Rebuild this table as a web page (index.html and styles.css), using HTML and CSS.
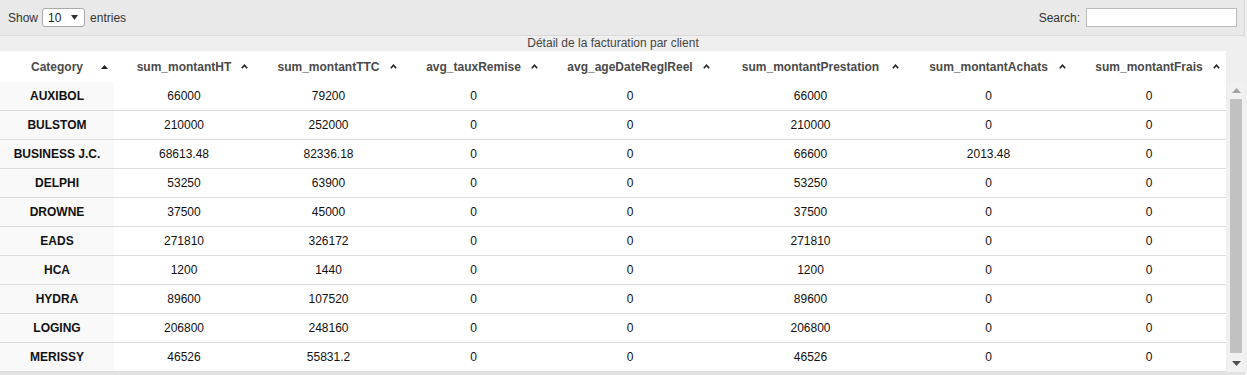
FILE: index.html
```html
<!DOCTYPE html>
<html lang="fr">
<head>
<meta charset="utf-8">
<title>Détail de la facturation par client</title>
<link rel="stylesheet" href="styles.css">
</head>
<body>
<div class="wrap">
  <div class="topbar">
    <label class="length">Show <span class="select">10<svg class="dd" width="7" height="5" viewBox="0 0 7 5"><polygon points="0,0 7,0 3.5,5" fill="#333"/></svg></span> entries</label>
    <label class="search">Search: <span class="input"></span></label>
  </div>
  <div class="caption">Détail de la facturation par client</div>
  <table class="head">
    <colgroup>
      <col class="c1"><col class="c2"><col class="c3"><col class="c4"><col class="c5"><col class="c6"><col class="c7"><col class="c8">
    </colgroup>
    <thead>
      <tr>
        <th class="asc">Category<svg class="si" width="7" height="4" viewBox="0 0 7 4"><polygon points="0,4 7,4 3.5,0" fill="#222"/></svg></th>
        <th>sum_montantHT<svg class="si" width="7" height="5" viewBox="0 0 7 5"><polyline points="0.8,4.2 3.5,1.2 6.2,4.2" fill="none" stroke="#222" stroke-width="1.6"/></svg></th>
        <th>sum_montantTTC<svg class="si" width="7" height="5" viewBox="0 0 7 5"><polyline points="0.8,4.2 3.5,1.2 6.2,4.2" fill="none" stroke="#222" stroke-width="1.6"/></svg></th>
        <th>avg_tauxRemise<svg class="si" width="7" height="5" viewBox="0 0 7 5"><polyline points="0.8,4.2 3.5,1.2 6.2,4.2" fill="none" stroke="#222" stroke-width="1.6"/></svg></th>
        <th>avg_ageDateReglReel<svg class="si" width="7" height="5" viewBox="0 0 7 5"><polyline points="0.8,4.2 3.5,1.2 6.2,4.2" fill="none" stroke="#222" stroke-width="1.6"/></svg></th>
        <th>sum_montantPrestation<svg class="si" width="7" height="5" viewBox="0 0 7 5"><polyline points="0.8,4.2 3.5,1.2 6.2,4.2" fill="none" stroke="#222" stroke-width="1.6"/></svg></th>
        <th>sum_montantAchats<svg class="si" width="7" height="5" viewBox="0 0 7 5"><polyline points="0.8,4.2 3.5,1.2 6.2,4.2" fill="none" stroke="#222" stroke-width="1.6"/></svg></th>
        <th>sum_montantFrais<svg class="si" width="7" height="5" viewBox="0 0 7 5"><polyline points="0.8,4.2 3.5,1.2 6.2,4.2" fill="none" stroke="#222" stroke-width="1.6"/></svg></th>
      </tr>
    </thead>
  </table>
  <div class="bodyarea">
    <table class="body">
      <colgroup>
        <col class="c1"><col class="c2"><col class="c3"><col class="c4"><col class="c5"><col class="c6"><col class="c7"><col class="c8">
      </colgroup>
      <tbody>
        <tr><td class="cat">AUXIBOL</td><td>66000</td><td>79200</td><td>0</td><td>0</td><td>66000</td><td>0</td><td>0</td></tr>
        <tr><td class="cat">BULSTOM</td><td>210000</td><td>252000</td><td>0</td><td>0</td><td>210000</td><td>0</td><td>0</td></tr>
        <tr><td class="cat">BUSINESS J.C.</td><td>68613.48</td><td>82336.18</td><td>0</td><td>0</td><td>66600</td><td>2013.48</td><td>0</td></tr>
        <tr><td class="cat">DELPHI</td><td>53250</td><td>63900</td><td>0</td><td>0</td><td>53250</td><td>0</td><td>0</td></tr>
        <tr><td class="cat">DROWNE</td><td>37500</td><td>45000</td><td>0</td><td>0</td><td>37500</td><td>0</td><td>0</td></tr>
        <tr><td class="cat">EADS</td><td>271810</td><td>326172</td><td>0</td><td>0</td><td>271810</td><td>0</td><td>0</td></tr>
        <tr><td class="cat">HCA</td><td>1200</td><td>1440</td><td>0</td><td>0</td><td>1200</td><td>0</td><td>0</td></tr>
        <tr><td class="cat">HYDRA</td><td>89600</td><td>107520</td><td>0</td><td>0</td><td>89600</td><td>0</td><td>0</td></tr>
        <tr><td class="cat">LOGING</td><td>206800</td><td>248160</td><td>0</td><td>0</td><td>206800</td><td>0</td><td>0</td></tr>
        <tr><td class="cat">MERISSY</td><td>46526</td><td>55831.2</td><td>0</td><td>0</td><td>46526</td><td>0</td><td>0</td></tr>
      </tbody>
    </table>
    <div class="scrollbar">
      <div class="arrow"><svg width="9" height="5" viewBox="0 0 9 5"><polygon points="0,5 9,5 4.5,0" fill="#a3a3a3"/></svg></div>
      <div class="track"><div class="thumb"></div></div>
      <div class="arrow"><svg width="9" height="5" viewBox="0 0 9 5"><polygon points="0,0 9,0 4.5,5" fill="#505050"/></svg></div>
    </div>
  </div>
  <div class="bottom"></div>
</div>
</body>
</html>
```

FILE: styles.css
```css
html, body {
  margin: 0;
  padding: 0;
  background: #efefef;
}
body {
  font-family: "Liberation Sans", Arial, sans-serif;
  font-size: 12px;
  color: #333;
  width: 1247px;
  height: 375px;
  overflow: hidden;
}
.wrap {
  width: 1247px;
}
.topbar {
  box-sizing: border-box;
  width: 1245px;
  height: 36px;
  background: #e9e9e9;
  border-right: 1px solid #d9d9d9;
  border-bottom: 1px solid #d9d9d9;
  display: flex;
  justify-content: space-between;
  align-items: center;
  padding: 0 7px 0 8px;
}
.length, .search {
  display: flex;
  align-items: center;
  color: #333;
}
.select {
  box-sizing: border-box;
  width: 43px;
  height: 19px;
  margin: 0 5px 0 4px;
  background: #fff;
  border: 1px solid #aaa;
  border-radius: 3px;
  display: flex;
  align-items: center;
  justify-content: space-between;
  padding: 0 6px 0 5px;
  color: #222;
}
.dd {
  display: block;
}
.input {
  box-sizing: border-box;
  width: 151px;
  height: 19px;
  margin-left: 6px;
  background: #fff;
  border: 1px solid #bbb;
}
.caption {
  height: 14px;
  line-height: 14px;
  padding-bottom: 1px;
  text-align: center;
  width: 1226px;
  color: #444;
  font-size: 12px;
}
table {
  border-collapse: collapse;
  table-layout: fixed;
  width: 1226px;
}
.c1 { width: 114px; }
.c2 { width: 140px; }
.c3 { width: 149px; }
.c4 { width: 141px; }
.c5 { width: 172px; }
.c6 { width: 189px; }
.c7 { width: 167px; }
.c8 { width: 154px; }
.head {
  background: #fff;
}
.head th {
  height: 31px;
  padding: 0;
  font-weight: bold;
  color: #4a4a4a;
  text-align: center;
  position: relative;
  white-space: nowrap;
}
.si {
  position: absolute;
  right: 6px;
  top: 13px;
}
.head th.asc .si {
  top: 14px;
}
.bodyarea {
  display: flex;
  width: 1245px;
}
.body {
  background: #fff;
}
.body td {
  height: 28px;
  padding: 0;
  text-align: center;
  color: #111;
  border-bottom: 1px solid #dcdcdc;
  white-space: nowrap;
}
.body td.cat {
  font-weight: bold;
  background: #f9f9f9;
  color: #111;
}
.scrollbar {
  width: 17px;
  height: 290px;
  margin-left: 2px;
  background: #f1f1f1;
  display: flex;
  flex-direction: column;
}
.arrow {
  height: 17px;
  display: flex;
  align-items: center;
  justify-content: center;
}
.track {
  flex: 1;
  padding: 0 2px;
}
.thumb {
  height: 254px;
  background: #c1c1c1;
  margin-right: 1px;
}
.bottom {
  height: 4px;
  width: 1245px;
  background: #e2e2e2;
}
```
